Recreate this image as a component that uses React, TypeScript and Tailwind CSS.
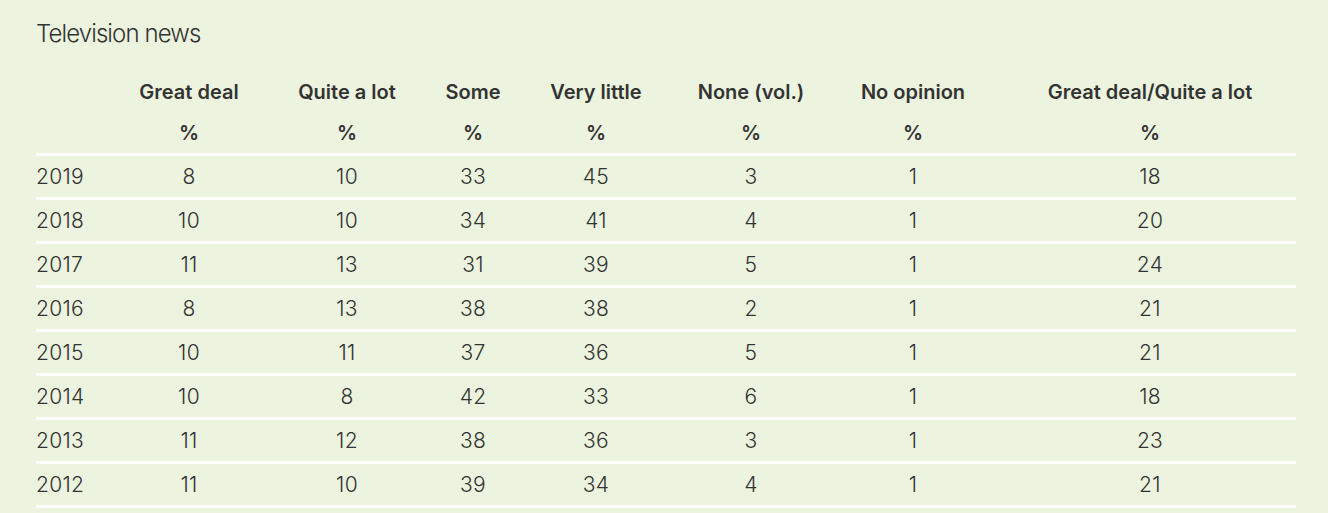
const COLUMNS = [
  "Great deal",
  "Quite a lot",
  "Some",
  "Very little",
  "None (vol.)",
  "No opinion",
  "Great deal/Quite a lot",
];

const ROWS: [string, ...number[]][] = [
  ["2019", 8, 10, 33, 45, 3, 1, 18],
  ["2018", 10, 10, 34, 41, 4, 1, 20],
  ["2017", 11, 13, 31, 39, 5, 1, 24],
  ["2016", 8, 13, 38, 38, 2, 1, 21],
  ["2015", 10, 11, 37, 36, 5, 1, 21],
  ["2014", 10, 8, 42, 33, 6, 1, 18],
  ["2013", 11, 12, 38, 36, 3, 1, 23],
  ["2012", 11, 10, 39, 34, 4, 1, 21],
];

// Fixed tracks so each column's centre lands where the reference puts it.
const GRID =
  "grid grid-cols-[76px_154px_162px_90px_156px_154px_170px_298px] [&>*:last-child]:pl-[6px]";

export default function App() {
  return (
    <div
      className="min-h-[513px] bg-[#ecf3de] px-9 pt-5 text-[#333333]"
      style={{ fontFamily: "Inter, 'Noto Sans', sans-serif" }}
    >
      <h2 className="text-[24px] leading-7 font-light tracking-[-0.9px]">
        Television news
      </h2>

      <div className="mt-6 w-[1260px]">
        <div className={`${GRID} h-10 items-center text-[20px] font-semibold`}>
          <div />
          {COLUMNS.map((label) => (
            <div key={label} className="text-center">
              {label}
            </div>
          ))}
        </div>
        <div
          className={`${GRID} h-11 items-center border-b-[3px] border-white text-[20px] font-semibold`}
        >
          <div />
          {COLUMNS.map((label) => (
            <div key={label} className="text-center">
              %
            </div>
          ))}
        </div>

        {ROWS.map(([year, ...values]) => (
          <div
            key={year}
            className={`${GRID} h-11 items-center border-b-[3px] border-white text-[21px] font-light tracking-[0.3px]`}
          >
            <div>{year}</div>
            {values.map((value, i) => (
              <div key={i} className="text-center">
                {value}
              </div>
            ))}
          </div>
        ))}
      </div>
    </div>
  );
}
